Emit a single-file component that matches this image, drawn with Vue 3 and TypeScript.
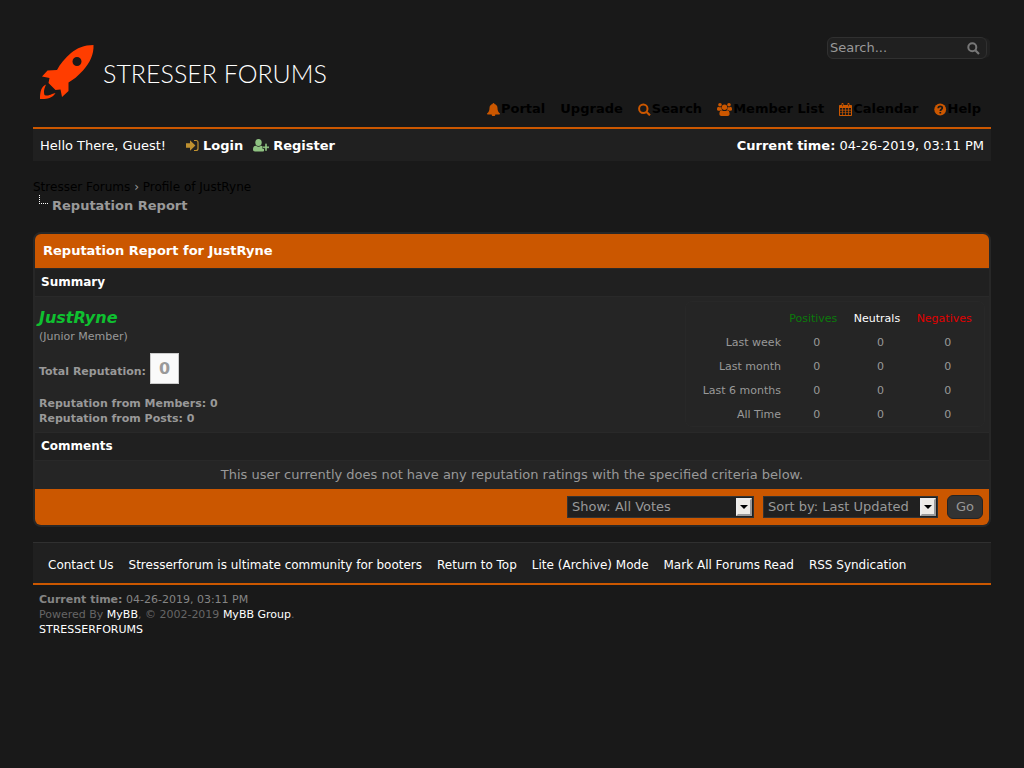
<script setup lang="ts">
import { ref } from 'vue'

interface NavItem { label: string; icon: string }

const navItems: NavItem[] = [
  { label: 'Portal', icon: 'bell' },
  { label: 'Upgrade', icon: '' },
  { label: 'Search', icon: 'search' },
  { label: 'Member List', icon: 'group' },
  { label: 'Calendar', icon: 'calendar' },
  { label: 'Help', icon: 'help' },
]
const periods: string[] = ['Last week', 'Last month', 'Last 6 months', 'All Time']
const footerLinks: string[] = [
  'Contact Us',
  'Stresserforum is ultimate community for booters',
  'Return to Top',
  'Lite (Archive) Mode',
  'Mark All Forums Read',
  'RSS Syndication',
]
const keywords = ref('')
const show = ref('all')
const sort = ref('updated')
</script>

<template>
  <div class="page">
    <header class="header">
      <a href="#" class="logo">
        <svg class="rocket" viewBox="0 0 54 54" aria-hidden="true">
          <path fill="#ff3d00" fill-rule="evenodd" d="M53.500 0C54 9 50 18 43 25.500 38 31 33 35 28.500 37.500L28.500 46 22 52 20.500 44.500 15.500 45 8.500 38 9.500 33 2 31.500 7.500 25.500 17 25C20 19 25 13 31 8 37 3 44 0 53.500 0ZM37 12a4.500 4.500 0 1 0 0 9 4.500 4.500 0 0 0 0-9Z" />
          <path fill="#ff3d00" d="M6 39.500C1 42 0 47 0 54 6 54.500 13 53 15.500 48L12 49C9 50.500 7 51 4.500 50 3.500 47 4 44 6 39.500Z" />
        </svg>
        <span class="brand">STRESSER FORUMS</span>
      </a>
      <div class="header-right">
        <form class="search" @submit.prevent>
          <input v-model="keywords" type="text" placeholder="Search..." aria-label="Search" />
          <button type="submit" aria-label="Submit search">
            <svg viewBox="0 0 13 13"><circle cx="5.300" cy="5.300" r="4" fill="none" stroke="currentColor" stroke-width="2" /><path d="M8.300 8.300 12 12" stroke="currentColor" stroke-width="2.200" /></svg>
          </button>
        </form>
        <nav class="nav">
          <a v-for="item in navItems" :key="item.label" href="#">
            <svg v-if="item.icon === 'bell'" class="icon" viewBox="0 0 13 13"><path fill="currentColor" d="M6.500 0c.6 0 1 .4.900 1C9.300 1.500 10.500 3 10.500 5c0 2.800.8 4.200 2.500 5.500 0 .5-.4 1-1 1H8.300a1.800 1.800 0 0 1-3.600 0H1c-.6 0-1-.5-1-1C1.700 9.200 2.500 7.800 2.500 5c0-2 1.200-3.500 3.100-4-.1-.6.300-1 .9-1Z" /></svg>
            <svg v-else-if="item.icon === 'search'" class="icon" viewBox="0 0 13 13"><circle cx="5.300" cy="5.800" r="4.200" fill="none" stroke="currentColor" stroke-width="2" /><path d="M8.300 8.800 12 12.300" stroke="currentColor" stroke-width="2.200" /></svg>
            <svg v-else-if="item.icon === 'group'" class="icon wide" viewBox="0 0 15 13"><g fill="currentColor"><circle cx="3" cy="1.800" r="1.800" /><circle cx="12" cy="1.800" r="1.800" /><circle cx="7.500" cy="4.300" r="2.700" /><path d="M0 6.500C0 4.500.6 3.700 1.300 3.700c.8.600 2.100.8 3 .3 0 1.200.3 2 .9 2.700-1 0-1.900.4-2.400 1H1.300C.5 7.700 0 7.300 0 6.500ZM15 6.500c0-2-.6-2.800-1.300-2.800-.8.600-2.100.8-3 .3 0 1.200-.3 2-.9 2.700 1 0 1.900.4 2.400 1h1.500c.8 0 1.300-.4 1.300-1.200ZM4.800 7.200c1.700 1.200 3.700 1.200 5.400 0 1.700 0 2.400 1.600 2.400 3.800 0 1.200-.8 2-2 2H4.400c-1.200 0-2-.8-2-2 0-2.200.7-3.800 2.400-3.800Z" /></g></svg>
            <svg v-else-if="item.icon === 'calendar'" class="icon" viewBox="0 0 13 13"><path fill="currentColor" fill-rule="evenodd" d="M1 2h1.500V1c0-1.300 2-1.300 2 0v1h4V1c0-1.300 2-1.300 2 0v1H12c.6 0 1 .4 1 1v9c0 .6-.4 1-1 1H1c-.6 0-1-.4-1-1V3c0-.6.4-1 1-1ZM1 5v1.700h2V5ZM3.700 5v1.700h2.500V5ZM6.900 5v1.700h2.400V5ZM10 5v1.700h2V5ZM1 7.400v2h2v-2ZM3.700 7.400v2h2.500v-2ZM6.900 7.400v2h2.400v-2ZM10 7.400v2h2v-2ZM1 10.100V12h2v-1.900ZM3.700 10.100V12h2.500v-1.900ZM6.900 10.100V12h2.400v-1.900ZM10 10.100V12h2v-1.900ZM3.200 1v2.200h.6V1ZM9.200 1v2.200h.6V1Z" /></svg>
            <svg v-else-if="item.icon === 'help'" class="icon" viewBox="0 0 13 13"><circle cx="6.200" cy="6.500" r="5.900" fill="currentColor" /><path d="M4.200 5.200C4.300 2.700 8.300 2.700 8.300 5c0 1.500-2 1.400-2 3M6.300 8.900v1.700" fill="none" stroke="#191919" stroke-width="1.700" /></svg>{{ item.label }}</a>
        </nav>
      </div>
    </header>

    <div class="welcome">
      <div class="guest">
        <span class="hello">Hello There, Guest!</span>
        <a href="#" class="login">
          <svg viewBox="0 0 13 13"><path fill="#be9030" d="M0 4.200h4V1.300L9.400 6.500 4 11.700V8.800H0Z" /><path d="M8 1.500h2c1.300 0 2 .7 2 2v6c0 1.300-.7 2-2 2H8" fill="none" stroke="#be9030" stroke-width="1.200" /></svg>
          Login</a>
        <a href="#" class="register">
          <svg viewBox="0 0 16 13"><g fill="#8fc382"><ellipse cx="5.500" cy="3.500" rx="3.200" ry="3.500" /><path d="M3 6.700c1.500 1.300 3.500 1.300 5 0 .8 0 1.400.3 1.800.8v2.600H11V12c-.4.400-1 .5-1.600.5H2C.7 12.500 0 11.700 0 10.500 0 8.300.8 6.700 3 6.700Z" /><path d="M12 4.500h2v2.800h2.500v2H14V12h-2V9.300H9.500v-2H12Z" stroke="#202020" stroke-width=".4" /></g></svg>
          Register</a>
      </div>
      <div class="clock"><strong>Current time:</strong> 04-26-2019, 03:11 PM</div>
    </div>

    <nav class="crumbs">
      <div><a href="#">Stresser Forums</a> › <a href="#">Profile of JustRyne</a></div>
      <div class="current"><span class="branch"></span><span>Reputation Report</span></div>
    </nav>

    <main class="report">
      <h1>Reputation Report for JustRyne</h1>
      <h2>Summary</h2>
      <section class="summary">
        <div class="member">
          <a href="#" class="name">JustRyne</a>
          <div>(Junior Member)</div>
          <div class="total"><strong>Total Reputation:</strong><span class="score">0</span></div>
          <strong>Reputation from Members: 0</strong>
          <strong>Reputation from Posts: 0</strong>
        </div>
        <div class="stats">
          <table>
            <thead>
              <tr><td></td><th scope="col" class="positive">Positives</th><th scope="col" class="neutral">Neutrals</th><th scope="col" class="negative">Negatives</th></tr>
            </thead>
            <tbody>
              <tr v-for="period in periods" :key="period"><th scope="row">{{ period }}</th><td>0</td><td>0</td><td>0</td></tr>
            </tbody>
          </table>
        </div>
      </section>
      <h2>Comments</h2>
      <p class="empty">This user currently does not have any reputation ratings with the specified criteria below.</p>
      <form class="filters" @submit.prevent>
        <div class="picker">
          <select v-model="show" aria-label="Show" class="show">
            <option value="all">Show: All Votes</option>
            <option value="positive">Show: Positive Ratings</option>
            <option value="neutral">Show: Neutral Ratings</option>
            <option value="negative">Show: Negative Ratings</option>
          </select>
          <span class="arrow"></span>
        </div>
        <div class="picker">
          <select v-model="sort" aria-label="Sort by" class="sort">
            <option value="updated">Sort by: Last Updated</option>
            <option value="username">Sort by: Username</option>
          </select>
          <span class="arrow"></span>
        </div>
        <button type="submit">Go</button>
      </form>
    </main>

    <footer>
      <nav class="footer-links"><a v-for="link in footerLinks" :key="link" href="#">{{ link }}</a></nav>
      <div class="copyright">
        <div class="time"><strong>Current time:</strong> 04-26-2019, 03:11 PM</div>
        <div>Powered By <a href="#">MyBB</a>, © 2002-2019 <a href="#">MyBB Group</a>.</div>
        <div><a href="#">STRESSERFORUMS</a></div>
      </div>
    </footer>
  </div>
</template>

<style>
body { margin: 0; background: #191919; }
</style>

<style scoped>
* { box-sizing: border-box; }
.page { padding: 37px 33px 0; color: #999; font: 13px/18px Verdana, "DejaVu Sans", sans-serif; }
a { color: #fff; text-decoration: none; }
svg { display: block; flex: none; }
.header { display: flex; justify-content: space-between; min-height: 90px; padding-bottom: 9px; }
.logo { display: flex; align-items: center; gap: 9px; height: 54px; margin: 8px 0 0 7px; }
.rocket { width: 54px; height: 54px; }
.brand { font: 300 25px/30px Lato, sans-serif; padding-top: 2px; color: #fff; white-space: nowrap; }
.header-right { display: flex; flex-direction: column; align-items: flex-end; justify-content: space-between; }
.search { display: flex; align-items: center; width: 160px; height: 22px; margin-right: 4px; border: 1px solid #303030; border-radius: 6px; background: #202020; box-shadow: 4px 0 0 -1px #202020; }
.search input { flex: 1; min-width: 0; padding: 0 2px; border: 0; outline: 0; background: transparent; color: #999; font: inherit; }
.search input::placeholder { color: #999; opacity: 1; }
.search button { padding: 0; margin-right: 6px; border: 0; background: none; color: #777; }
.search svg { width: 13px; height: 13px; }
.nav { display: flex; gap: 15px; padding-right: 10px; font-weight: bold; white-space: nowrap; }
.nav a { display: flex; align-items: center; gap: 1px; color: #000; }
.icon { width: 13px; height: 13px; color: #cb5700; }
.icon.wide { width: 15px; }
.welcome { display: flex; justify-content: space-between; align-items: center; min-height: 34px; padding: 1px 7px 0; border-top: 2px solid #cb5700; background: #202020; color: #fff; }
.guest, .guest a { display: flex; align-items: center; }
.hello { margin-right: 20px; }
.login, .register { font-weight: bold; }
.login { gap: 4px; margin-right: 10px; }
.register { gap: 4px; }
.login svg { width: 13px; height: 13px; }
.register svg { width: 16px; height: 13px; }
.crumbs { margin-top: 17px; font-size: 12px; }
.crumbs a { color: #000; }
.current { display: flex; padding: 1px 0 0 6px; font-size: 13px; font-weight: bold; }
.branch { width: 9px; height: 9px; margin: -2px 4px 0 0; border: dotted #fff; border-width: 0 0 1px 1px; }
.report { margin-top: 17px; overflow: hidden; border: 2px solid #272727; border-radius: 8px; background: #252525; }
h1, h2, p { margin: 0; font-size: 13px; line-height: 18px; }
h1 { padding: 8px; background: #cb5700; color: #fff; }
h2 { padding: 5px 6px; border: solid #292929; border-width: 1px 0; background: #202020; color: #fff; font-size: 12px; line-height: 17px; }
.summary { display: flex; justify-content: space-between; padding: 4px 4px 5px; font-size: 11px; line-height: 15px; }
.member { display: flex; flex-direction: column; }
.name { margin: 7px 0 1px; color: #0fc030; font-size: 16px; line-height: 20px; font-weight: bold; font-style: italic; }
.total { display: flex; align-items: center; gap: 4px; margin: 9px 0 12px; }
.total strong { padding-top: 5px; }
.score { padding: 5px 8px; border: 1px solid #ccc; background: #fafafa; font-size: 16px; line-height: 19px; font-weight: bold; }
.stats { width: 300px; padding: 4px 4px 0; border: 1px solid #282828; border-radius: 7px; }
table { width: 100%; border-collapse: collapse; }
td, th { height: 24px; padding: 0 4px 0 11px; font-weight: normal; text-align: center; }
thead th { height: 24px; padding: 0 8px; }
tbody th { padding: 0; text-align: right; width: 91px; }
.positive { color: #0b7a0b; }
.neutral { color: #fff; }
.negative { color: #e00000; }
.empty { padding: 5px; text-align: center; }
.filters { display: flex; justify-content: flex-end; align-items: center; gap: 9px; padding: 6px; background: #cb5700; }
.picker { display: grid; align-items: center; }
.picker > * { grid-area: 1 / 1; }
select { appearance: none; height: 22px; padding: 0 4px; border: 1px solid #333; border-radius: 0; background: #202020; color: #999; font: inherit; }
.show { width: 187px; }
.sort { width: 175px; }
.arrow { display: grid; place-items: center; justify-self: end; width: 16px; height: 18px; margin-right: 2px; border: 2px outset #eee; background: #eeebe6; pointer-events: none; }
.arrow::after { content: ""; border: solid transparent; border-width: 4px 4px 0; border-top-color: #000; }
.filters button { width: 36px; height: 24px; padding: 0; border: 1px solid #242424; border-radius: 6px; background: #333; color: #999; font: inherit; }
.footer-links { display: flex; flex-wrap: wrap; gap: 0 15px; margin-top: 15px; padding: 13px 15px 9px; border-top: 1px solid #303030; border-bottom: 2px solid #cb5700; background: #202020; font-size: 12px; }
.copyright { padding: 7px 6px; color: #666; font-size: 11px; line-height: 15px; }
.time { color: #858585; }
</style>
